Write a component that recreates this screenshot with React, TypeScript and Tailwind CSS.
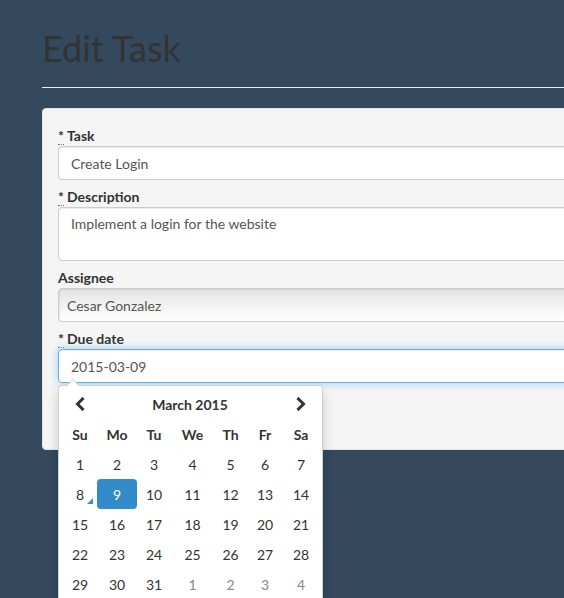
import React from "react";

const font = { fontFamily: "Lato, 'Open Sans', 'Liberation Sans', sans-serif" };

function Req() {
  return <span className="border-b border-dotted border-[#777] leading-none mr-[3px]">*</span>;
}

function Chevron({ dir }: { dir: "left" | "right" }) {
  return (
    <svg width="10" height="14" viewBox="0 0 10 14">
      {dir === "left" ? (
        <polyline points="7.5,2 2.5,7 7.5,12" fill="none" stroke="#333" strokeWidth="3" strokeLinecap="square" />
      ) : (
        <polyline points="2.5,2 7.5,7 2.5,12" fill="none" stroke="#333" strokeWidth="3" strokeLinecap="square" />
      )}
    </svg>
  );
}

const dows = ["Su", "Mo", "Tu", "We", "Th", "Fr", "Sa"];
const weeks: { d: number; old?: boolean }[][] = [
  [1, 2, 3, 4, 5, 6, 7].map((d) => ({ d })),
  [8, 9, 10, 11, 12, 13, 14].map((d) => ({ d })),
  [15, 16, 17, 18, 19, 20, 21].map((d) => ({ d })),
  [22, 23, 24, 25, 26, 27, 28].map((d) => ({ d })),
  [{ d: 29 }, { d: 30 }, { d: 31 }, { d: 1, old: true }, { d: 2, old: true }, { d: 3, old: true }, { d: 4, old: true }],
];

function Calendar() {
  return (
    <div className="absolute left-0 top-[36px] w-[265px] bg-white border border-[rgba(0,0,0,0.18)] rounded-[4px] shadow-[0_6px_12px_rgba(0,0,0,0.175)] px-[4px] pt-[3px] pb-[4px] text-[14px] text-[#333]">
      <div className="absolute -top-[7px] left-[7px] w-0 h-0 border-l-[7px] border-r-[7px] border-b-[7px] border-l-transparent border-r-transparent border-b-[#ccc]" />
      <div className="absolute -top-[6px] left-[8px] w-0 h-0 border-l-[6px] border-r-[6px] border-b-[6px] border-l-transparent border-r-transparent border-b-white" />
      <div className="grid grid-cols-[34px_40px_34px_43px_33px_36px_36px]">
        <div className="h-[30px] flex items-center justify-center">
          <Chevron dir="left" />
        </div>
        <div className="col-span-5 h-[30px] flex items-center justify-center font-bold">March 2015</div>
        <div className="h-[30px] flex items-center justify-center">
          <Chevron dir="right" />
        </div>
        {dows.map((d) => (
          <div key={d} className="h-[30px] flex items-center justify-center font-bold">
            {d}
          </div>
        ))}
        {weeks.flat().map((c, i) => {
          const selected = i === 8;
          const today = i === 7;
          return (
            <div
              key={i}
              className={
                "relative h-[30px] flex items-center justify-center rounded-[4px] " +
                (selected ? "bg-[#348bc9] text-white" : c.old ? "text-[#888]" : "text-[#333]")
              }
            >
              {c.d}
              {today && (
                <span className="absolute right-[4px] bottom-[5px] w-0 h-0 border-l-[6px] border-b-[6px] border-l-transparent border-b-[#428bca]" />
              )}
            </div>
          );
        })}
      </div>
    </div>
  );
}

export default function App() {
  return (
    <div className="w-[564px] h-[598px] overflow-hidden bg-[#34495e]" style={font}>
      <div className="w-[800px] pl-[42px] pt-[28px]">
        <h1 className="text-[36px] leading-[40px] text-[#333] font-normal">Edit Task</h1>
        <div className="mt-[19px] h-px bg-[#eee]" />
        <div className="mt-[20px] bg-[#f5f5f5] border border-[#e3e3e3] rounded-[4px] pl-[15px] pt-[17px] h-[342px] text-[14px]">
          <label className="block h-[20px] leading-[20px] font-bold text-[#333]">
            <Req />Task
          </label>
          <div className="h-[34px] bg-white border border-[#ccc] rounded-[4px] px-[12px] flex items-center text-[#555] shadow-[inset_0_1px_1px_rgba(0,0,0,0.075)]">
            Create Login
          </div>
          <label className="block mt-[7px] h-[20px] leading-[20px] font-bold text-[#333]">
            <Req />Description
          </label>
          <div className="h-[54px] bg-white border border-[#ccc] rounded-[4px] px-[12px] pt-[6px] leading-[20px] text-[#555] shadow-[inset_0_1px_1px_rgba(0,0,0,0.075)]">
            Implement a login for the website
          </div>
          <label className="block mt-[7px] h-[20px] leading-[20px] font-bold text-[#333]">Assignee</label>
          <div className="h-[34px] bg-gradient-to-b from-[#e4e4e4] to-white border border-[#ccc] rounded-[4px] px-[8px] flex items-center text-[#555] shadow-[inset_1px_1px_2px_rgba(0,0,0,0.08)]">
            Cesar Gonzalez
          </div>
          <label className="block mt-[7px] h-[20px] leading-[20px] font-bold text-[#333]">
            <Req />Due date
          </label>
          <div className="relative">
            <div className="h-[34px] bg-white border border-[#66afe9] rounded-[4px] px-[12px] flex items-center text-[#555] shadow-[inset_0_1px_1px_rgba(0,0,0,0.075),0_0_8px_rgba(102,175,233,0.6)]">
              2015-03-09
            </div>
            <Calendar />
          </div>
        </div>
      </div>
    </div>
  );
}
